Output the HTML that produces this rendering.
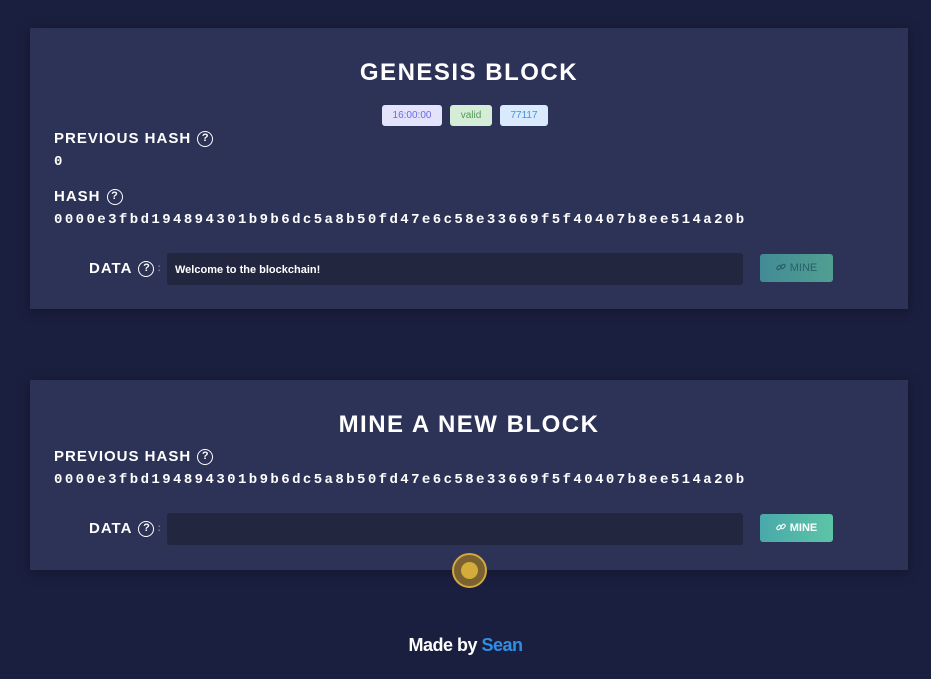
<!DOCTYPE html>
<html><head><meta charset="utf-8"><style>
*{box-sizing:border-box;margin:0;padding:0}
body{width:931px;height:679px;background:#1b1f3f;font-family:"Liberation Sans",sans-serif;color:#fff;position:relative;overflow:hidden}
.card{position:absolute;left:30px;width:878px;background:#2d3257;box-shadow:0 2px 12px rgba(0,0,0,.35)}
.title{position:absolute;left:0;width:100%;text-align:center;font-weight:bold;font-size:24px;letter-spacing:1.5px}
.lbl{position:absolute;left:24px;font-weight:bold;font-size:15px;letter-spacing:1px;display:flex;align-items:center}
.q{display:inline-block;width:16px;height:16px;border:1.5px solid #fff;border-radius:50%;font-size:11px;line-height:13px;text-align:center;margin-left:6px;letter-spacing:0;font-weight:bold}
.hash{position:absolute;left:24px;font-family:"Liberation Mono",monospace;font-weight:bold;font-size:14px;letter-spacing:2.42px}
.data{position:absolute;left:59px;font-weight:bold;font-size:15px;letter-spacing:1px;display:flex;align-items:center}
.data .c{color:#888;font-size:10px;margin-left:3px}
.inp{position:absolute;left:137px;width:576px;height:32px;background:#22263f;border-radius:3px;font-size:11px;font-weight:bold;padding:11px 8px}
.btn{position:absolute;left:730px;width:73px;height:28px;border-radius:3px;background:linear-gradient(90deg,#4aa9ab,#5cc4a5);font-size:11px;font-weight:bold;text-align:center;line-height:28px}
.btn svg{vertical-align:-1px;margin-right:4px}
.tag{position:absolute;top:77px;height:21px;border-radius:3px;font-size:10px;line-height:21px;text-align:center}
</style></head><body>
<div class="card" style="top:28px;height:281px">
 <div class="title" style="top:31px">GENESIS BLOCK</div>
 <div class="tag" style="left:352px;width:60px;background:#e3e3fb;color:#6a6adf">16:00:00</div>
 <div class="tag" style="left:420px;width:42px;background:#d5ecd6;color:#4f9a55">valid</div>
 <div class="tag" style="left:470px;width:48px;background:#d8eafb;color:#4a90d8">77117</div>
 <div class="lbl" style="top:102px">PREVIOUS HASH<span class="q">?</span></div>
 <div class="hash" style="top:126px">0</div>
 <div class="lbl" style="top:160px">HASH<span class="q">?</span></div>
 <div class="hash" style="top:184px">0000e3fbd194894301b9b6dc5a8b50fd47e6c58e33669f5f40407b8ee514a20b</div>
 <div class="data" style="top:232px">DATA<span class="q">?</span><span class="c">:</span></div>
 <div class="inp" style="top:225px">Welcome to the blockchain!</div>
 <div class="btn" style="top:226px;opacity:.75;color:#2a6f6e;font-weight:normal"><svg width="10" height="10" viewBox="0 0 10 10" fill="none" stroke="#2a6f6e" stroke-width="1.2"><rect x="0.5" y="4" width="5" height="3" rx="1.5" transform="rotate(-45 3 5.5)"/><rect x="4.5" y="3" width="5" height="3" rx="1.5" transform="rotate(-45 7 4.5)"/></svg>MINE</div>
</div>
<div class="card" style="top:380px;height:190px">
 <div class="title" style="top:31px">MINE A NEW BLOCK</div>
 <div class="lbl" style="top:68px">PREVIOUS HASH<span class="q">?</span></div>
 <div class="hash" style="top:92px">0000e3fbd194894301b9b6dc5a8b50fd47e6c58e33669f5f40407b8ee514a20b</div>
 <div class="data" style="top:140px">DATA<span class="q">?</span><span class="c">:</span></div>
 <div class="inp" style="top:133px"></div>
 <div class="btn" style="top:134px"><svg width="10" height="10" viewBox="0 0 10 10" fill="none" stroke="#fff" stroke-width="1"><rect x="0.5" y="4" width="5" height="3" rx="1.5" transform="rotate(-45 3 5.5)"/><rect x="4.5" y="3" width="5" height="3" rx="1.5" transform="rotate(-45 7 4.5)"/></svg>MINE</div>
</div>
<div style="position:absolute;left:452px;top:553px;width:35px;height:35px;border-radius:50%;background:#7a6230;border:2px solid #d4a83a"><div style="position:absolute;left:7px;top:7px;width:17px;height:17px;border-radius:50%;background:#d4ac3c"></div></div>
<div style="position:absolute;left:0;width:931px;top:635px;text-align:center;font-size:18px;font-weight:bold;letter-spacing:-.5px">Made by <span style="color:#2f8ee6">Sean</span></div>
</body></html>
